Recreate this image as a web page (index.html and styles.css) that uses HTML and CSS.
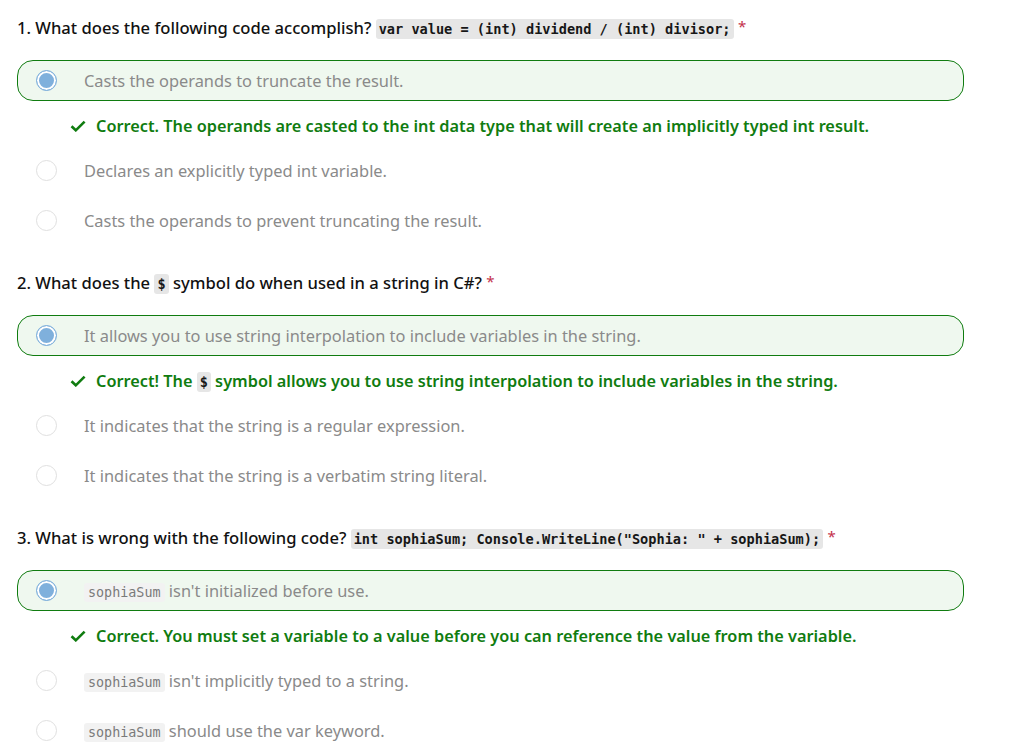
FILE: index.html
```html
<!DOCTYPE html>
<html>
<head>
<meta charset="utf-8">
<link rel="stylesheet" href="styles.css">
</head>
<body>
<div class="quiz">
  <section class="question">
    <h2 class="q-title">1. What does the following code accomplish? <code class="q-code">var value = (int) dividend / (int) divisor;</code> <span class="req">*</span></h2>
    <div class="option selected"><span class="radio"></span><span class="opt-text">Casts the operands to truncate the result.</span></div>
    <div class="feedback"><svg class="check" viewBox="0 0 16 12" width="16" height="12"><path d="M1.5 6.2 L5.8 10.3 L14.6 1.6" fill="none" stroke="#107c10" stroke-width="2.6"/></svg><span>Correct. The operands are casted to the int data type that will create an implicitly typed int result.</span></div>
    <div class="option"><span class="radio"></span><span class="opt-text">Declares an explicitly typed int variable.</span></div>
    <div class="option"><span class="radio"></span><span class="opt-text">Casts the operands to prevent truncating the result.</span></div>
  </section>
  <section class="question">
    <h2 class="q-title">2. What does the <code class="q-code">$</code> symbol do when used in a string in C#? <span class="req">*</span></h2>
    <div class="option selected"><span class="radio"></span><span class="opt-text">It allows you to use string interpolation to include variables in the string.</span></div>
    <div class="feedback"><svg class="check" viewBox="0 0 16 12" width="16" height="12"><path d="M1.5 6.2 L5.8 10.3 L14.6 1.6" fill="none" stroke="#107c10" stroke-width="2.6"/></svg><span>Correct! The <code class="q-code">$</code> symbol allows you to use string interpolation to include variables in the string.</span></div>
    <div class="option"><span class="radio"></span><span class="opt-text">It indicates that the string is a regular expression.</span></div>
    <div class="option"><span class="radio"></span><span class="opt-text">It indicates that the string is a verbatim string literal.</span></div>
  </section>
  <section class="question">
    <h2 class="q-title">3. What is wrong with the following code? <code class="q-code">int sophiaSum; Console.WriteLine("Sophia: " + sophiaSum);</code> <span class="req">*</span></h2>
    <div class="option selected"><span class="radio"></span><span class="opt-text"><code class="o-code">sophiaSum</code> isn't initialized before use.</span></div>
    <div class="feedback"><svg class="check" viewBox="0 0 16 12" width="16" height="12"><path d="M1.5 6.2 L5.8 10.3 L14.6 1.6" fill="none" stroke="#107c10" stroke-width="2.6"/></svg><span>Correct. You must set a variable to a value before you can reference the value from the variable.</span></div>
    <div class="option"><span class="radio"></span><span class="opt-text"><code class="o-code">sophiaSum</code> isn't implicitly typed to a string.</span></div>
    <div class="option"><span class="radio"></span><span class="opt-text"><code class="o-code">sophiaSum</code> should use the var keyword.</span></div>
  </section>
</div>
</body>
</html>
```
FILE: styles.css
```css
html, body {
  margin: 0;
  padding: 0;
  background: #ffffff;
}
body {
  font-family: "Noto Sans", "Open Sans", sans-serif;
  color: #171717;
}
.quiz {
  width: 947px;
  padding: 14px 0 0 17px;
  display: flex;
  flex-direction: column;
  gap: 29px;
}
.question {
  display: flex;
  flex-direction: column;
}
.q-title {
  margin: 0 0 19px 0;
  font-size: 16.6px;
  font-weight: 550;
  line-height: 24px;
  color: #111111;
}
.q-code {
  font-family: "DejaVu Sans Mono", monospace;
  font-size: 13.6px;
  font-weight: bold;
  background: #e6e6e6;
  border-radius: 3px;
  padding: 2px 3px;
  color: #171717;
}
.req {
  color: #c4314b;
  font-weight: 400;
  font-size: 15px;
  vertical-align: 2px;
}
.option {
  display: flex;
  align-items: center;
  height: 40px;
  box-sizing: border-box;
  padding-left: 18px;
  margin-top: 10px;
  border: 1px solid transparent;
  border-radius: 16px;
}
.option.selected {
  height: 41px;
  margin-top: 0;
  background: #eff8ef;
  border-color: #107c10;
}
.radio {
  width: 21px;
  height: 21px;
  border-radius: 50%;
  border: 1px solid #e0e0e0;
  box-sizing: border-box;
  margin-right: 27px;
  flex: none;
  background: #fff;
}
.selected .radio {
  border: 1.5px solid #7fb0dc;
  background: #7fb0dc;
  box-shadow: inset 0 0 0 2px #ffffff;
}
.opt-text {
  font-size: 16.4px;
  color: #8a8a8a;
}
.o-code {
  font-family: "DejaVu Sans Mono", monospace;
  font-size: 13.4px;
  background: #f2f2f2;
  border-radius: 3px;
  padding: 2px 4px;
  color: #7a7a7a;
}
.feedback {
  display: flex;
  align-items: center;
  gap: 10px;
  margin: 10px 0 0 53px;
  height: 29px;
  font-size: 16.3px;
  font-weight: 600;
  color: #107c10;
}
.feedback .q-code {
  color: #171717;
}
.check {
  flex: none;
}
```
